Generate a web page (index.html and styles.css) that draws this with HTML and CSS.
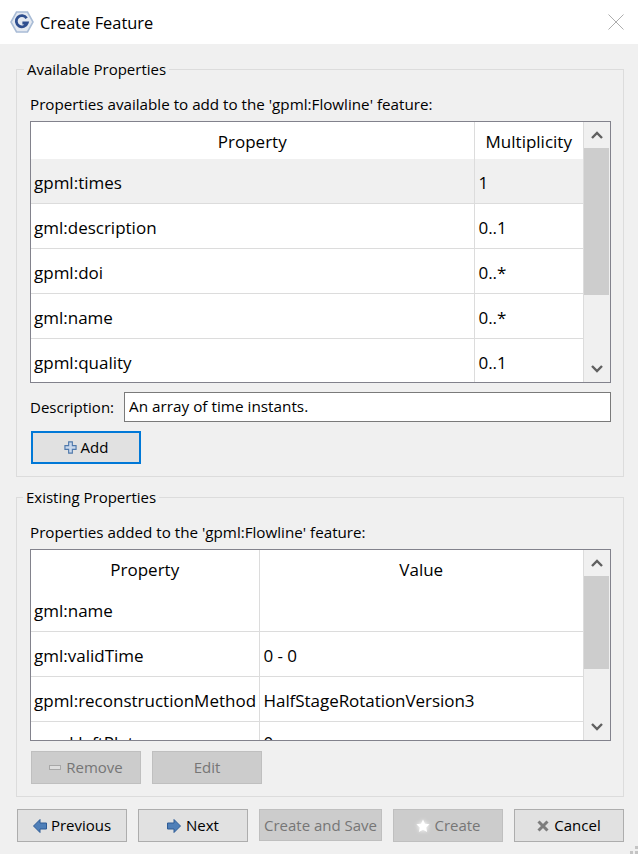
FILE: index.html
```html
<!DOCTYPE html>
<html>
    <head>
        <meta charset="utf-8">
        <title>Create Feature</title>
        <link rel="stylesheet" href="styles.css">
    </head>
    <body>
        <div class="titlebar">
            <svg class="logo" width="24" height="24" viewBox="0 0 24 24">
                <path d="M6.5 2H17.5L23 12L17.5 22H6.5L1 12Z" fill="#e4e9f1" stroke="#a9bcd6" stroke-width="1.6"/>
                <path d="M16.6 8.2A5.6 5.6 0 1 0 17.2 13H12.4" fill="none" stroke="#2f4f8f" stroke-width="2.8"/>
            </svg>
            <span class="title">Create Feature</span>
            <svg class="close" width="16" height="16" viewBox="0 0 16 16">
                <path d="M0.5 0.5L15.5 15.5M15.5 0.5L0.5 15.5" stroke="#adadad" stroke-width="1" fill="none"/>
            </svg>
        </div>

        <div class="main">
            <fieldset class="group group-available">
                <legend>Available Properties</legend>
                <div class="caption">Properties available to add to the 'gpml:Flowline' feature:</div>
                <div class="grid grid-available">
                    <div class="grid-body">
                        <table>
                            <colgroup><col class="col-prop"><col></colgroup>
                            <tr><th>Property</th><th>Multiplicity</th></tr>
                            <tr class="selected"><td>gpml:times</td><td>1</td></tr>
                            <tr><td>gml:description</td><td>0..1</td></tr>
                            <tr><td>gpml:doi</td><td>0..*</td></tr>
                            <tr><td>gml:name</td><td>0..*</td></tr>
                            <tr><td>gpml:quality</td><td>0..1</td></tr>
                        </table>
                    </div>
                    <div class="scrollbar">
                        <div class="arrow">
                            <svg width="12" height="8" viewBox="0 0 12 8"><path d="M1 7L6 2L11 7" fill="none" stroke="#606060" stroke-width="2.4"/></svg>
                        </div>
                        <div class="track">
                            <div class="thumb thumb-available"></div>
                        </div>
                        <div class="arrow">
                            <svg width="12" height="8" viewBox="0 0 12 8"><path d="M1 1L6 6L11 1" fill="none" stroke="#606060" stroke-width="2.4"/></svg>
                        </div>
                    </div>
                </div>
                <div class="desc-row">
                    <label>Description:</label>
                    <input type="text" class="desc" value="An array of time instants.">
                </div>
                <div class="btn-row">
                    <button class="btn btn-focus">
                        <svg width="13" height="13" viewBox="0 0 14 14"><path d="M5 1H9V5H13V9H9V13H5V9H1V5H5Z" fill="#c9d8ec" stroke="#4f78ab" stroke-width="1.2"/></svg>
                        Add
                    </button>
                </div>
            </fieldset>

            <fieldset class="group group-existing">
                <legend>Existing Properties</legend>
                <div class="caption">Properties added to the 'gpml:Flowline' feature:</div>
                <div class="grid grid-existing">
                    <div class="grid-body">
                        <table>
                            <colgroup><col class="col-name"><col></colgroup>
                            <tr><th>Property</th><th>Value</th></tr>
                            <tr><td>gml:name</td><td></td></tr>
                            <tr><td>gml:validTime</td><td>0 - 0</td></tr>
                            <tr><td>gpml:reconstructionMethod</td><td>HalfStageRotationVersion3</td></tr>
                            <tr class="cut-row"><td>gpml:leftPlate</td><td>0</td></tr>
                        </table>
                    </div>
                    <div class="scrollbar">
                        <div class="arrow">
                            <svg width="12" height="8" viewBox="0 0 12 8"><path d="M1 7L6 2L11 7" fill="none" stroke="#606060" stroke-width="2.4"/></svg>
                        </div>
                        <div class="track">
                            <div class="thumb thumb-existing"></div>
                        </div>
                        <div class="arrow">
                            <svg width="12" height="8" viewBox="0 0 12 8"><path d="M1 1L6 6L11 1" fill="none" stroke="#606060" stroke-width="2.4"/></svg>
                        </div>
                    </div>
                </div>
                <div class="btn-row btn-row-existing">
                    <button class="btn btn-off">
                        <svg width="12" height="6" viewBox="0 0 12 6"><rect x="0.5" y="0.5" width="11" height="4" fill="#dedede" stroke="#a8a8a8"/></svg>
                        Remove
                    </button>
                    <button class="btn btn-off">Edit</button>
                </div>
            </fieldset>

            <div class="footer">
                <button class="btn btn-prev">
                    <svg width="14" height="14" viewBox="0 0 14 14"><path d="M0.5 7L7 0.5V4H13.5V10H7V13.5Z" fill="#4f7fb8" stroke="#2f5c96"/></svg>
                    Previous
                </button>
                <button class="btn">
                    <svg width="14" height="14" viewBox="0 0 14 14"><path d="M13.5 7L7 0.5V4H0.5V10H7V13.5Z" fill="#4f7fb8" stroke="#2f5c96"/></svg>
                    Next
                </button>
                <button class="btn btn-off btn-save">Create and Save</button>
                <button class="btn btn-off btn-create">
                    <svg class="star" width="16" height="16" viewBox="0 0 16 16"><path d="M8 1.5L10 5.8L14.6 6.3L11.2 9.4L12.1 14L8 11.7L3.9 14L4.8 9.4L1.4 6.3L6 5.8Z" fill="#fff"/></svg>
                    Create
                </button>
                <button class="btn">
                    <svg width="12" height="12" viewBox="0 0 12 12"><path d="M1.5 1.5L10.5 10.5M10.5 1.5L1.5 10.5" stroke="#7d7d7d" stroke-width="3" fill="none"/></svg>
                    Cancel
                </button>
            </div>
        </div>

        <svg class="grip" width="8" height="8" viewBox="0 0 8 8">
            <path d="M5 0h3v3H5zM0 5h3v3H0zM5 5h3v3H5z" fill="#c4c4c4"/>
        </svg>
    </body>
</html>
```

FILE: styles.css
```css
html, body {
    margin: 0;
    padding: 0;
}
body {
    width: 638px;
    height: 854px;
    overflow: hidden;
    background-color: #f0f0f0;
    font-family: "Open Sans", "Noto Sans", sans-serif;
    font-size: 15px;
    color: #000;
}

/* title bar */
.titlebar {
    display: flex;
    align-items: center;
    height: 44px;
    padding: 0 14px 0 10px;
    box-sizing: border-box;
    background-color: #fff;
}
.logo {
    margin-right: 6px;
}
.title {
    flex: 1;
    font-size: 16.4px;
}

/* main part */
.main {
    padding: 0 14px 0 16px;
}
.group {
    margin: 0;
    padding: 0 12px 0 13px;
    border: 1px solid #dcdcdc;
    box-sizing: border-box;
    min-width: 0;
}
.group legend {
    margin-left: -6px;
    padding: 0 3px;
    height: 22px;
    line-height: 22px;
}
.group-available {
    margin-top: 14px;
    height: 419px;
}
.group-existing {
    margin-top: 9px;
    height: 311px;
}
.group-existing legend {
    margin-left: -7px;
}
.caption {
    height: 20px;
    line-height: 20px;
    margin-top: 14px;
    margin-bottom: 7px;
    font-size: 15.2px;
}

/* grids */
.grid {
    display: flex;
    border: 1px solid #82828c;
    background-color: #fff;
    box-sizing: border-box;
    font-size: 17px;
}
.grid-available {
    height: 262px;
}
.grid-existing {
    height: 192px;
}
.grid-body {
    flex: 1;
    overflow: hidden;
}
table {
    width: 100%;
    table-layout: fixed;
    border-collapse: collapse;
}
.col-prop {
    width: 443px;
}
.col-name {
    width: 228px;
}
th {
    height: 35px;
    padding: 2px 0 0;
    font-weight: normal;
    border-right: 1px solid #dcdcdc;
}
td {
    height: 42px;
    padding: 2px 3px 0;
    border-right: 1px solid #dcdcdc;
    border-bottom: 1px solid #dcdcdc;
    white-space: nowrap;
    overflow: hidden;
}
th:last-child, td:last-child {
    border-right: 0;
}
td:last-child {
    padding-left: 4px;
    letter-spacing: -0.05px;
}
/* this row is cut by the bottom of the grid, only the tops of its letters show */
.cut-row td {
    padding-top: 0;
    padding-bottom: 4px;
    height: 40px;
}
.selected td {
    background-color: #f0f0f0;
}
.scrollbar {
    display: flex;
    flex-direction: column;
    width: 26px;
    border-left: 1px solid #dcdcdc;
    box-sizing: content-box;
    background-color: #f0f0f0;
}
.arrow {
    display: flex;
    align-items: center;
    justify-content: center;
    height: 26px;
}
.track {
    flex: 1;
}
.thumb {
    margin-right: 1px;
    background-color: #cdcdcd;
}
.thumb-available {
    height: 147px;
}
.thumb-existing {
    height: 93px;
}

/* description */
.desc-row {
    display: flex;
    align-items: center;
    margin-top: 9px;
}
.desc-row label {
    width: 94px;
}
.desc {
    flex: 1;
    height: 30px;
    box-sizing: border-box;
    padding: 0 4px 2px;
    border: 1px solid #7a7a7a;
    font: inherit;
    font-size: 15.3px;
    color: #000;
    background-color: #fff;
    border-radius: 0;
    outline: none;
}

/* buttons */
.btn-row {
    display: flex;
    gap: 11px;
    margin-top: 9px;
    padding-left: 1px;
}
.btn-row-existing {
    margin-top: 10px;
}
.btn {
    display: flex;
    align-items: center;
    justify-content: center;
    gap: 5px;
    width: 110px;
    height: 33px;
    padding: 0 0 1px;
    box-sizing: border-box;
    border: 1px solid #adadad;
    background-color: #e1e1e1;
    color: #000;
    font: inherit;
}
.btn svg {
    margin-top: 1px;
}
.btn-focus {
    border: 2px solid #0078d7;
    gap: 4px;
    padding-bottom: 2px;
}
.btn-off {
    border-color: #bfbfbf;
    background-color: #ccc;
    color: #767676;
}
.btn-save {
    width: 123px;
    height: 32px;
}
.btn-prev {
    gap: 4px;
}
.btn-create {
    gap: 3px;
}
.star {
    filter: drop-shadow(0 0 2px #fff);
}
.footer {
    display: flex;
    align-items: flex-start;
    gap: 11px;
    margin-top: 12px;
    padding-left: 1px;
}

/* corner grip sits over the window edge */
.grip {
    position: absolute;
    right: 0;
    bottom: 0;
}
```
